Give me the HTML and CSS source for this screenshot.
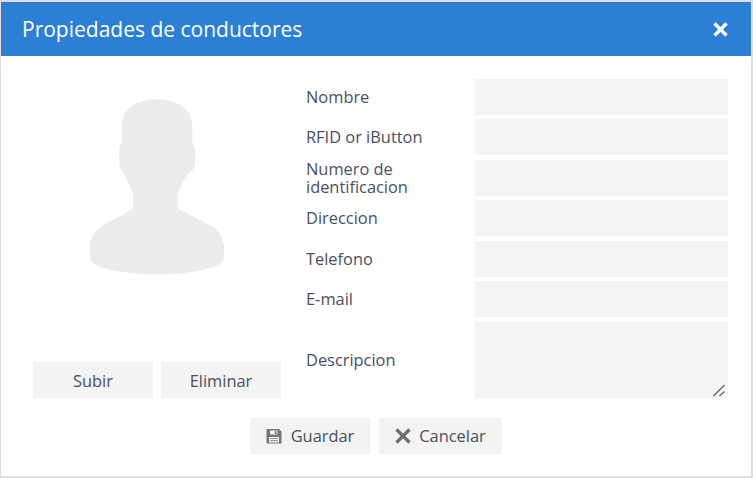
FILE: index.html
```html
<!DOCTYPE html>
<html lang="es">
<head>
<meta charset="utf-8">
<title>Propiedades de conductores</title>
<link rel="stylesheet" href="styles.css">
</head>
<body>
<div class="dialog">
  <header class="titlebar">
    <h1 class="title">Propiedades de conductores</h1>
    <button class="close" type="button" aria-label="Cerrar">
      <svg width="15" height="15" viewBox="0 0 15 15"><path d="M1.500 1.500 13.500 13.500M13.500 1.500 1.500 13.500" stroke="#fff" stroke-width="3.400" fill="none"/></svg>
    </button>
  </header>
  <div class="content">
    <section class="photo-col">
      <div class="photo">
        <svg width="180" height="195" viewBox="0 0 540 585"><path fill="#ececec" d="M290 28C225 28 186 60 186 105V160C180 165 178 172 178 182V222C178 235 184 242 190 246L220 310V348C220 356 216 360 208 364L130 405C105 420 90 442 90 470V505C95 535 190 553 290 553S487 535 492 505V470C490 440 475 420 450 405L365 362C355 356 352 352 352 344V310L385 250C398 242 405 232 405 215V182C405 172 402 165 397 160V105C397 60 355 28 290 28Z"/></svg>
      </div>
      <div class="photo-actions">
        <button class="btn btn-photo" type="button">Subir</button>
        <button class="btn btn-photo" type="button">Eliminar</button>
      </div>
    </section>
    <form class="fields">
      <label class="label">Nombre</label><input class="input" type="text">
      <label class="label">RFID or iButton</label><input class="input" type="text">
      <label class="label">Numero de identificacion</label><input class="input" type="text">
      <label class="label">Direccion</label><input class="input" type="text">
      <label class="label">Telefono</label><input class="input" type="text">
      <label class="label">E-mail</label><input class="input" type="text">
      <label class="label">Descripcion</label>
      <div class="textarea-wrap">
        <textarea class="input textarea"></textarea>
        <svg class="grip" width="13" height="13" viewBox="0 0 13 13"><path d="M.5 12 11.500 1M6.500 12 11.500 7.500" stroke="#666" stroke-width="1.300" fill="none"/></svg>
      </div>
    </form>
  </div>
  <footer class="footer">
    <button class="btn btn-save" type="button">
      <svg class="icon" width="16" height="16" viewBox="0 0 16 16"><path fill="#777" fill-rule="evenodd" d="M1 1H13L15.500 3.500V15.500H.5V1ZM4 2.500V6.500H11.500V2.500ZM8.800 3H10.500V6H8.800ZM3 9V14.500H13V9Z"/><path fill="#999" d="M4 10H12V11H4ZM4 12H12V13H4Z"/></svg>
      <span class="btn-text">Guardar</span>
    </button>
    <button class="btn btn-cancel" type="button">
      <svg class="icon" width="16" height="16" viewBox="0 0 16 16"><path d="M1.500 1.500 14.500 14.500M14.500 1.500 1.500 14.500" stroke="#6e6e6e" stroke-width="3.200" fill="none"/></svg>
      <span class="btn-text">Cancelar</span>
    </button>
  </footer>
</div>
</body>
</html>
```
FILE: styles.css
```css
* { box-sizing: border-box; }
html, body { margin: 0; height: 100%; }
body {
  background: #dedede;
  font-family: "Open Sans", sans-serif;
  color: #444;
  padding: 2px 2px 2px 1px;
  overflow: hidden;
}
.dialog {
  width: 750px;
  height: 474px;
  background: #fff;
  display: flex;
  flex-direction: column;
}
.titlebar {
  height: 54px;
  flex: none;
  background: #2b80d5;
  display: flex;
  align-items: center;
  justify-content: space-between;
  padding: 0 23px 0 21px;
}
.title {
  margin: 0;
  font-size: 21px;
  font-weight: 400;
  color: #fff;
}
.close {
  border: 0;
  background: none;
  padding: 0;
  display: flex;
}
.content {
  display: flex;
  padding: 22.75px 23px 0 32px;
  height: 342px;
  flex: none;
}
.photo-col {
  width: 248px;
  flex: none;
  display: flex;
  flex-direction: column;
  justify-content: space-between;
}
.photo {
  display: flex;
  padding-top: 11.25px;
  padding-left: 27px;
}
.photo-actions {
  display: flex;
  gap: 8px;
}
.btn {
  height: 36px;
  border: 0;
  background: #f3f3f3;
  font-family: inherit;
  font-size: 16.4px;
  color: #4a5060;
  padding: 0;
}
.btn-photo { width: 120px; }
.fields {
  margin-left: 25px;
  width: 422px;
  display: grid;
  grid-template-columns: 169px 253px;
  grid-template-rows: repeat(6, 36px) 76px;
  row-gap: 4.5px;
  align-items: center;
}
.label {
  font-size: 16.4px;
  line-height: 18.5px;
  margin-bottom: -0.5px;
  color: #4a5060;
}
.input {
  display: block;
  width: 253px;
  height: 100%;
  border: 0;
  background: #f4f4f4;
  margin: 0;
  padding: 0;
}
.textarea-wrap {
  position: relative;
  height: 100%;
}
.textarea { resize: none; }
.grip {
  position: absolute;
  right: 2px;
  bottom: 1px;
}
.footer {
  display: flex;
  justify-content: center;
  gap: 9px;
  padding-top: 20px;
}
.btn-save { width: 120px; }
.btn-cancel { width: 123px; }
.btn-save, .btn-cancel {
  display: flex;
  align-items: center;
  justify-content: center;
}
.btn-save { gap: 9px; }
.btn-cancel { gap: 8px; }
.btn-text { margin-bottom: 2px; }
.icon { flex: none; }
```
